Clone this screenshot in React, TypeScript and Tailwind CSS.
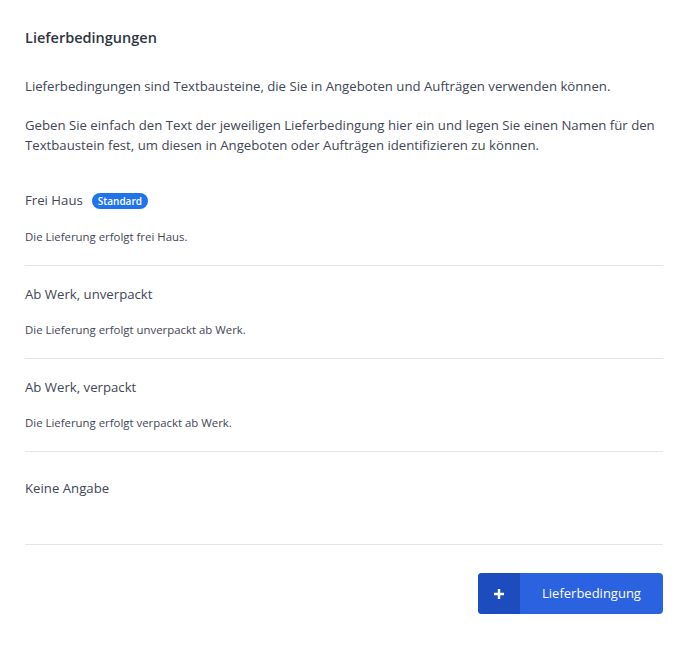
import React from "react";

const items = [
  { title: "Frei Haus", text: "Die Lieferung erfolgt frei Haus.", standard: true },
  { title: "Ab Werk, unverpackt", text: "Die Lieferung erfolgt unverpackt ab Werk." },
  { title: "Ab Werk, verpackt", text: "Die Lieferung erfolgt verpackt ab Werk." },
  { title: "Keine Angabe", text: "" },
];

const App = () => {
  return (
    <div className="min-h-screen bg-white px-[25px] pt-[28px] text-[#3f4656] font-['Open_Sans',sans-serif]">
      <h1 className="text-[14.5px] font-semibold leading-5 text-[#2f3542]">Lieferbedingungen</h1>

      <p className="mt-[28px] text-[13.2px] leading-5">
        Lieferbedingungen sind Textbausteine, die Sie in Angeboten und Aufträgen verwenden können.
      </p>
      <p className="mt-[19px] w-[640px] text-[13.2px] leading-5">
        Geben Sie einfach den Text der jeweiligen Lieferbedingung hier ein und legen Sie einen Namen für den
        Textbaustein fest, um diesen in Angeboten oder Aufträgen identifizieren zu können.
      </p>

      <div className="mt-[36px] w-[638px]">
        {items.map((item, i) => (
          <div
            key={item.title}
            className={`border-b border-[#e4e4ec] ${i === 0 ? "pt-0 pb-[20px]" : item.text ? "pt-[19px] pb-[20px]" : "pt-[27px] pb-[45px]"}`}
          >
            <div className="flex h-5 items-center gap-[9px] text-[13.2px]">
              <span>{item.title}</span>
              {item.standard && (
                <span className="rounded-full bg-[#1f74ea] px-[6px] py-[1px] text-[10px] font-semibold leading-[14px] text-white">
                  Standard
                </span>
              )}
            </div>
            {item.text && (
              <div className={`${i === 0 ? "mt-[18px]" : "mt-[17px]"} text-[11.4px] leading-4`}>{item.text}</div>
            )}
          </div>
        ))}
      </div>

      <div className="mt-[28px] flex w-[638px] justify-end">
        <button className="flex h-[41px] w-[185px] overflow-hidden rounded-[4px] bg-[#2a62e0] text-white">
          <span className="flex h-full w-[42px] items-center justify-center bg-[#1d4cbf]">
            <svg width="12" height="12" viewBox="0 0 12 12">
              <path d="M6 1v10M1 6h10" stroke="white" strokeWidth="2.4" />
            </svg>
          </span>
          <span className="flex flex-1 items-center justify-center text-[13px] font-medium">Lieferbedingung</span>
        </button>
      </div>
    </div>
  );
};

export default App;
